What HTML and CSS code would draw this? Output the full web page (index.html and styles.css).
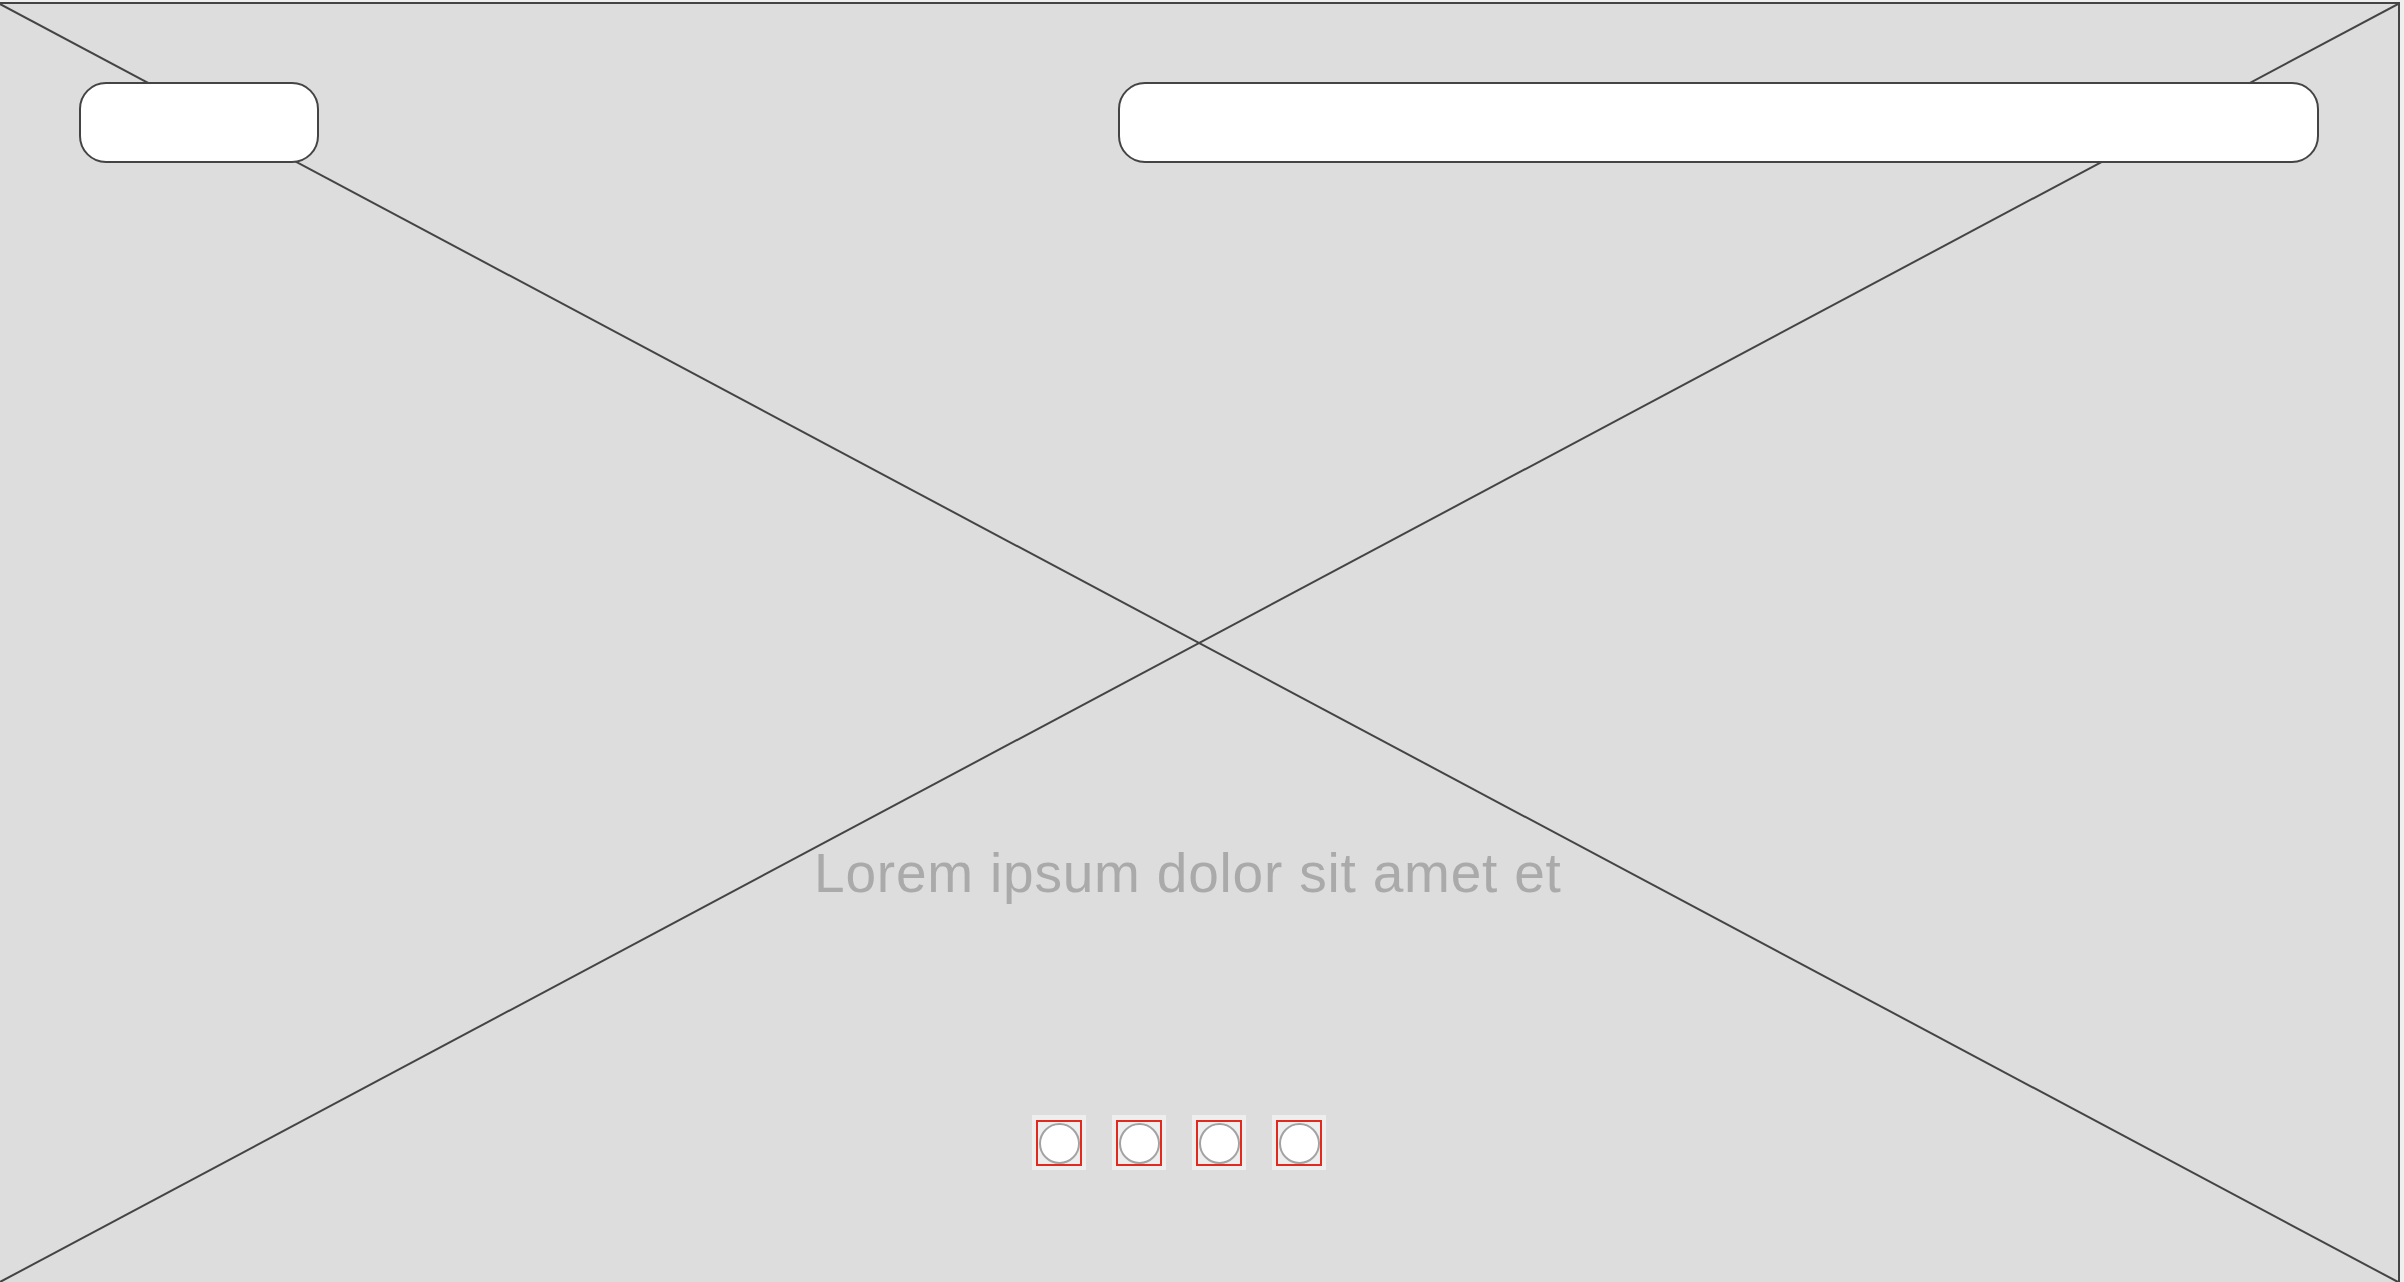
FILE: index.html
```html
<!DOCTYPE html>
<html lang="en">
<head>
<meta charset="utf-8">
<title>Wireframe</title>
<link rel="stylesheet" href="styles.css">
</head>
<body>
<div class="frame">
  <svg class="cross" viewBox="0 0 100 100" preserveAspectRatio="none" aria-hidden="true">
    <line x1="0" y1="0" x2="100" y2="100" vector-effect="non-scaling-stroke"/>
    <line x1="100" y1="0" x2="0" y2="100" vector-effect="non-scaling-stroke"/>
  </svg>
  <div class="header">
    <div class="pill pill-small"></div>
    <div class="pill pill-wide"></div>
  </div>
  <div class="caption"><span class="caption-text">Lorem ipsum dolor sit amet et</span></div>
  <div class="dots">
    <div class="dot"><div class="dot-frame"><div class="dot-circle"></div></div></div>
    <div class="dot"><div class="dot-frame"><div class="dot-circle"></div></div></div>
    <div class="dot"><div class="dot-frame"><div class="dot-circle"></div></div></div>
    <div class="dot"><div class="dot-frame"><div class="dot-circle"></div></div></div>
  </div>
</div>
</body>
</html>
```

FILE: styles.css
```css
html, body {
  margin: 0;
  padding: 0;
}
body {
  background: #efefef;
  overflow: hidden;
  width: 2404px;
  height: 1282px;
  font-family: "Liberation Sans", Arial, sans-serif;
}
.frame {
  position: relative;
  box-sizing: border-box;
  width: 2402px;
  height: 1282px;
  margin-top: 2px;
  margin-left: -2px;
  border: 2px solid #444444;
  background: #dddddd;
  display: flex;
  flex-direction: column;
}
.cross {
  position: absolute;
  left: 0;
  top: 0;
  width: 100%;
  height: 100%;
  pointer-events: none;
}
.cross line {
  stroke: #444444;
  stroke-width: 2;
}
.header {
  position: relative;
  display: flex;
  justify-content: space-between;
  padding: 78px 79px 0 79px;
}
.pill {
  box-sizing: border-box;
  height: 81px;
  border: 2px solid #444444;
  border-radius: 27px;
  background: #ffffff;
}
.pill-small {
  width: 240px;
}
.pill-wide {
  width: 1201px;
}
.caption {
  position: relative;
  margin-top: 679px;
  margin-left: 814px;
  height: 62px;
  line-height: 62px;
  white-space: nowrap;
}
.caption-text {
  font-size: 55px;
  letter-spacing: 0.8px;
  color: #aaaaaa;
}
.dots {
  position: relative;
  display: flex;
  gap: 26px;
  margin-top: 211px;
  margin-left: 1032px;
}
.dot {
  background: #eeeeee;
  padding: 5px 4px 4px 4px;
}
.dot-frame {
  box-sizing: border-box;
  width: 46px;
  height: 46px;
  border: 2px solid #e0291f;
  display: flex;
  align-items: center;
  justify-content: center;
}
.dot-circle {
  box-sizing: border-box;
  width: 41px;
  height: 41px;
  border-radius: 50%;
  border: 2px solid #a3a3a3;
  background: #ffffff;
}
```
